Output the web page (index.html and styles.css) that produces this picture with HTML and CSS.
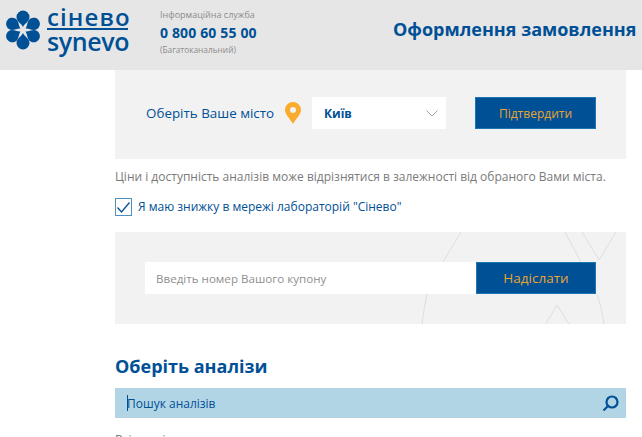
FILE: index.html
```html
<!DOCTYPE html>
<html lang="uk">
<head>
<meta charset="utf-8">
<title>Оформлення замовлення</title>
<link rel="stylesheet" href="styles.css">
</head>
<body>
<header class="header">
  <div class="logo">
    <svg class="flower" width="38" height="42" viewBox="-19 -21 38 42">
      <defs><path id="petal" d="M0 -3 C-1.500 -6.500 -6.500 -8.500 -6.500 -13A6.500 6.500 0 0 1 6.500 -13C6.500 -8.500 1.500 -6.500 0 -3Z"/></defs>
      <use href="#petal"/>
      <use href="#petal" transform="rotate(60) scale(.95)"/>
      <use href="#petal" transform="rotate(120) scale(.95)"/>
      <use href="#petal" transform="rotate(180)"/>
      <use href="#petal" transform="rotate(240) scale(.95)"/>
      <use href="#petal" transform="rotate(300) scale(.95)"/>
    </svg>
    <div class="wordmark">
      <span class="word word-top">сінево</span>
      <span class="word word-bottom">synevo</span>
    </div>
  </div>
  <div class="service">
    <span class="service-label">Інформаційна служба</span>
    <span class="service-phone">0 800 60 55 00</span>
    <span class="service-note">(Багатоканальний)</span>
  </div>
  <h1 class="page-title">Оформлення замовлення</h1>
</header>
<main class="main">
  <section class="city-panel">
    <span class="city-label">Оберіть Ваше місто</span>
    <svg class="pin" width="16" height="22" viewBox="0 0 16 22">
      <path fill-rule="evenodd" d="M8 0A8 8 0 0 0 0 8C0 12.500 5 16.500 8 22C11 16.500 16 12.500 16 8A8 8 0 0 0 8 0ZM8 5A3 3 0 1 1 8 11A3 3 0 1 1 8 5Z"/>
    </svg>
    <div class="select">
      <span class="select-value">Київ</span>
      <svg class="chevron" width="12" height="7" viewBox="0 0 12 7"><path d="M.5 .5L6 6L11.500 .5"/></svg>
    </div>
    <button class="button confirm" type="button">Підтвердити</button>
  </section>
  <p class="note">Ціни і доступність аналізів може відрізнятися в залежності від обраного Вами міста.</p>
  <label class="discount">
    <span class="checkbox">
      <svg width="15" height="13" viewBox="0 0 15 13"><path d="M1.500 6.500L5.500 11L13.500 1.500"/></svg>
    </span>
    <span>Я маю знижку в мережі лабораторій "Сінево"</span>
  </label>
  <section class="coupon-panel">
    <svg class="coupon-art" width="511" height="92" viewBox="0 0 511 92">
      <path d="M346 0L328 30M450 0L466 30M467 0L484 28L501 0M312 62Q309 76 307 92M482 62Q487 76 489 92M431 92L442 73L454 92"/>
    </svg>
    <div class="coupon-form">
      <div class="coupon-input">Введіть номер Вашого купону</div>
      <button class="button send" type="button">Надіслати</button>
    </div>
  </section>
  <h2 class="section-title">Оберіть аналізи</h2>
  <div class="search">
    <span class="caret"></span>
    <span class="search-text">Пошук аналізів</span>
    <svg class="search-icon" width="17" height="17" viewBox="0 0 17 17"><circle cx="10" cy="7" r="5.500"/><path d="M6 11L1.500 15.500"/></svg>
  </div>
  <p class="all">Всі аналізи</p>
</main>
</body>
</html>
```

FILE: styles.css
```css
* { box-sizing: border-box; }
html, body { margin: 0; height: 437px; overflow: hidden; }
body { background: #fff; font-family: "Open Sans", "Noto Sans", sans-serif; color: #005096; }

.header { height: 70px; background: #e6e6e6; display: flex; align-items: flex-start; }
.logo { display: flex; margin: 9px 0 0 4px; width: 156px; gap: 5px; color: #005096; }
.flower { fill: #005096; flex: none; }
.wordmark { display: flex; flex-direction: column; width: 81px; }
.word { font-size: 24px; line-height: 20px; font-weight: 600; white-space: nowrap; }
.word-top { border-bottom: 2px solid #005096; height: 21px; letter-spacing: 1.100px; line-height: 16px; }
.word-bottom { font-size: 25px; line-height: 22px; letter-spacing: -.4px; }

.service { display: flex; flex-direction: column; margin: 9px 0 0 0; width: 233px; }
.service-label { font-size: 9px; line-height: 12px; color: #8c8c8c; }
.service-phone { font-size: 14px; line-height: 20px; font-weight: 700; margin-top: 2px; letter-spacing: .15px; }
.service-note { font-size: 8.300px; line-height: 11px; color: #8c8c8c; margin-top: 1px; }
.page-title { margin: 17px 0 0 0; font-size: 18px; line-height: 25px; font-weight: 700; white-space: nowrap; }

.main { margin-left: 115px; width: 511px; }
.city-panel { height: 89px; background: #f2f2f2; display: flex; align-items: flex-start; padding: 27px 0 0 31px; }
.city-label { font-size: 13.400px; line-height: 32px; width: 139px; white-space: nowrap; }
.pin { fill: #fbab2c; margin-top: 5px; flex: none; }
.select { margin-left: 11px; width: 134px; height: 32px; background: #fff; display: flex; align-items: center; justify-content: space-between; padding: 0 8px 0 12px; }
.select-value { font-size: 12px; font-weight: 700; }
.chevron { fill: none; stroke: #a6a6a6; stroke-width: 1; }
.button { border: 1px solid #1b75b0; background: #005096; color: #e8a530; font-family: inherit; padding: 0; }
.confirm { margin-left: 29px; width: 121px; height: 32px; font-size: 12px; }

.note { margin: 9px 0 0; font-size: 12px; line-height: 17px; color: #7a7a7a; white-space: nowrap; }
.discount { display: flex; align-items: center; gap: 6px; margin-top: 13px; font-size: 12px; line-height: 18px; }
.checkbox { width: 17px; height: 18px; border: 1px solid #4f8fbd; background: #fff; display: flex; align-items: center; justify-content: center; }
.checkbox svg { fill: none; stroke: #005096; stroke-width: 1.300; }

.coupon-panel { position: relative; height: 92px; margin-top: 16px; background: #f2f2f2; padding: 30px 0 0 30px; }
.coupon-art { position: absolute; left: 0; top: 0; fill: none; stroke: #dedede; stroke-width: 1; }
.coupon-form { position: relative; display: flex; width: 451px; height: 32px; }
.coupon-input { width: 331px; background: #fff; font-size: 11.600px; line-height: 33px; padding-left: 11px; color: #8f8f8f; }
.send { width: 120px; font-size: 13.500px; }

.section-title { margin: 29px 0 0; font-size: 18px; line-height: 26px; font-weight: 700; }
.search { position: relative; height: 30px; margin-top: 9px; background: #b2d5e6; display: flex; align-items: center; justify-content: space-between; padding: 0 7px 0 12px; }
.caret { position: absolute; left: 12px; top: 7px; width: 1px; height: 16px; background: #005096; }
.search-text { font-size: 12px; }
.search-icon { fill: none; stroke: #005096; stroke-width: 2.200; }
.all { margin: 13px 0 0; font-size: 12px; line-height: 17px; color: #7a7a7a; }
```
